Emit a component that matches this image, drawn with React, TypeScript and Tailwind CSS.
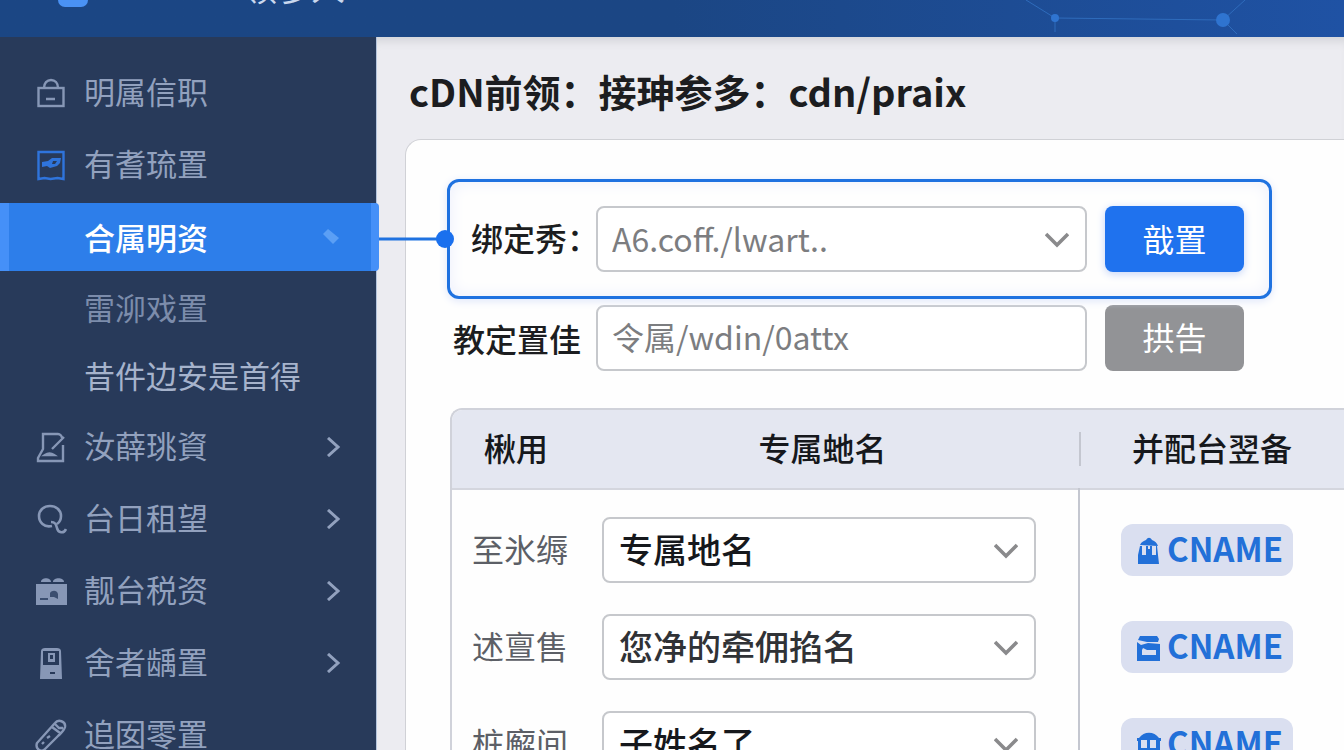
import { useState } from 'react';
import type { ReactNode } from 'react';

interface MenuItem {
  label: string;
  icon: ReactNode;
  expandable?: boolean;
}

const LockIcon = () => (
  <svg viewBox="0 0 32 32" className="w-8 h-8 text-[#8797b6]" fill="none" stroke="currentColor" strokeWidth="2.4">
    <rect x="3.5" y="11" width="25" height="18" />
    <path d="M9 11c0-5 3-8 7-8s7 3 7 8M11 22h9" />
  </svg>
);

const BookmarkIcon = () => (
  <svg viewBox="0 0 32 32" className="w-8 h-8 text-[#2f74dc]" fill="none" stroke="currentColor" strokeWidth="2.4">
    <path d="M3.5 3h25v27l-6-1-7 1-6-1-6 1z" />
    <path d="M7 13l6-1 4-3h9l-1 5-3 3-7 2-3-2-5 1z" fill="currentColor" stroke="none" />
    <path d="M18 12h4l-2 3h-3z" fill="#283a5a" stroke="none" />
  </svg>
);

const NoteIcon = () => (
  <svg viewBox="0 0 32 32" className="w-8 h-8 text-[#8797b6]" fill="none" stroke="currentColor" strokeWidth="2.4">
    <path d="M27 7c0-2-2-4-4-4H8v15L3 27v3h25V14M29 6L17 18" />
    <path d="M10 24c3-2 6-2 9 0z" />
  </svg>
);

const SearchIcon = () => (
  <svg viewBox="0 0 32 32" className="w-8 h-8 text-[#8797b6]" fill="none" stroke="currentColor" strokeWidth="2.6">
    <path d="M17 23C9 25 4 19 4 13 4 7 9 3 15 3s11 4 11 10c0 3-1 6-4 8M16 19c4 0 5 2 6 6 1 5 7 6 9 1" />
  </svg>
);

const BoxIcon = () => (
  <svg viewBox="0 0 32 32" className="w-8 h-8 text-[#8797b6]" fill="currentColor">
    <path d="M6 7c0-5 10-5 10 0zM18 7c0-5 11-5 11 0zM1 9h31v21H1z" />
    <path d="M15 18c2-3 7-3 8 1v5l-4-2h-4zM5 23h8v2H5z" fill="#3b4e70" />
  </svg>
);

const CabinetIcon = () => (
  <svg viewBox="0 0 32 32" className="w-8 h-8 text-[#8797b6]" fill="currentColor">
    <path fillRule="evenodd" d="M6 4c0-2 2-3 4-3h12c2 0 4 1 4 3l1 28H5zM8 4v14h16V4z" />
    <path fillRule="evenodd" d="M13 6h7v9h-7zM15 8v4h3V8z" />
    <path d="M15 25h5v2h-5z" fill="#283a5a" />
  </svg>
);

const PencilIcon = () => (
  <svg viewBox="0 0 32 32" className="w-8 h-8 text-[#8797b6]" fill="none" stroke="currentColor" strokeWidth="2.4">
    <path d="M20 4c3-4 11-2 10 4-1 4-4 6-7 9L10 30c-4 4-10 0-8-6zM17 8l8 6M7 25l2-2M12 19l3-2M20 5l4 4h4" />
  </svg>
);

const TowerIcon = () => (
  <svg viewBox="0 0 24 28" className="w-6 h-7 shrink-0" fill="currentColor">
    <path d="M3 9c1-3 4-4 6-5 2-3 4-3 6 0 3 1 5 3 6 6z" />
    <path fillRule="evenodd" d="M3 10h17l2 18H1V19zM5 10v9h4v-9zM15 10v9h4v-9zM11 10v3h2v-3z" />
  </svg>
);

const InboxIcon = () => (
  <svg viewBox="0 0 24 28" className="w-6 h-7 shrink-0" fill="currentColor">
    <path d="M3 3h17l2 3-1 3H10L1 7z" />
    <path fillRule="evenodd" d="M0 9l4 3 7-2 12 1v17H0zM5 17v5h14v-5h-9l-4-2z" />
  </svg>
);

const StoreIcon = () => (
  <svg viewBox="0 0 24 28" className="w-6 h-7 shrink-0" fill="currentColor">
    <path d="M2 8c5-7 15-7 20 0z" />
    <path fillRule="evenodd" d="M0 8h24v3h-1v15H1V11H0zM4 10v8h6v-8zM13 10v8h6v-8z" />
  </svg>
);

const Chevron = ({ className }: { className: string }) => (
  <svg viewBox="0 0 24 24" className={className} fill="none" stroke="currentColor" strokeWidth="3.6">
    <path d="M1 7l11 11L23 7" />
  </svg>
);

const topItems: MenuItem[] = [
  { label: '明属信职', icon: <LockIcon /> },
  { label: '有耆琉置', icon: <BookmarkIcon /> },
];

const bottomItems: MenuItem[] = [
  { label: '汝薛珧資', icon: <NoteIcon />, expandable: true },
  { label: '台日租望', icon: <SearchIcon />, expandable: true },
  { label: '靓台税资', icon: <BoxIcon />, expandable: true },
  { label: '舍者龋置', icon: <CabinetIcon />, expandable: true },
  { label: '追囡零置', icon: <PencilIcon /> },
];

const rows = [
  { label: '至氷缛', value: '专属地名', icon: <TowerIcon />, tone: 'text-[#16181c]' },
  { label: '述亶售', value: '您净的牵佣掐名', icon: <InboxIcon />, tone: 'text-[#303236]' },
  { label: '桩廨间', value: '子姓名了', icon: <StoreIcon />, tone: 'text-[#16181c]' },
];

function NavRow({ item }: { item: MenuItem }) {
  return (
    <li>
      <a href="#" className="flex h-[72px] items-center pl-[35px] pr-[34px]">
        {item.icon}
        <span className="ml-[17px] flex-1 pb-1">{item.label}</span>
        {item.expandable && (
          <svg viewBox="0 0 16 20" className="w-4 h-5" fill="none" stroke="currentColor" strokeWidth="3">
            <path d="M2 1l10 9-10 9" />
          </svg>
        )}
      </a>
    </li>
  );
}

function Sidebar() {
  return (
    <nav className="z-10 w-[377px] shrink-0 bg-[#283a5a] pt-5 text-[31px] leading-9 text-[#92a1be] border-r border-[#b4c4dc]">
      <ul>
        {topItems.map((item) => (
          <NavRow key={item.label} item={item} />
        ))}
        <li>
          <ul className="pt-0.5">
            <li className="mb-1">
              <a
                href="#"
                className="flex h-[68px] w-[379px] items-center justify-between rounded-r-sm border-l-[9px] border-r-8 border-[#4590f8] bg-[#2d7eea] pl-[75px] pr-[31px] font-medium text-white"
              >
                合属明资
                <svg viewBox="0 0 18 18" className="w-[18px] h-[18px]" fill="#5b9ff5">
                  <path d="M6 1l11 9-6 6L1 6z" />
                </svg>
              </a>
            </li>
            <li>
              <a href="#" className="flex h-[68px] items-center pb-1 pl-[84px] text-[#7c8cab]">雷泖戏置</a>
            </li>
            <li>
              <a href="#" className="flex h-[68px] items-center pb-1 pl-[84px] text-[#a6b3cc]">昔件边安是首得</a>
            </li>
          </ul>
        </li>
        {bottomItems.map((item) => (
          <NavRow key={item.label} item={item} />
        ))}
      </ul>
    </nav>
  );
}

function DomainTable() {
  return (
    <div className="ml-[3px] mt-[37px] rounded-tl-xl border-l-2 border-t-2 border-[#d0d2da] overflow-hidden">
      <table className="w-full table-fixed border-collapse">
        <thead>
          <tr className="h-[79px] border-b-2 border-[#d4d6de] bg-[#e4e7f1] text-[32px] leading-10 text-[#16181c]">
            <th className="w-[150px] pb-1 pl-8 text-left font-medium">楸用</th>
            <th className="w-[477px] pb-1 pr-9 text-center font-medium">专属虵名</th>
            <th className="text-left font-medium">
              <div className="flex h-[34px] items-center border-l-2 border-[#c4c7d0] pb-1 pl-[51px] whitespace-nowrap">并配台翌备</div>
            </th>
          </tr>
        </thead>
        <tbody>
          {rows.map((row, i) => (
            <tr key={row.label}>
              <td className="pt-[27px] pb-1 pl-5 align-top">
                <label htmlFor={`domain-${i}`} className="block text-[32px] leading-[62px] text-[#5c5f66]">
                  {row.label}
                </label>
              </td>
              <td className="pt-[27px] pb-1 pr-[42px] align-top">
                <div className="relative">
                  <select
                    id={`domain-${i}`}
                    className={`block h-[66px] w-full appearance-none rounded-lg border-2 border-[#c6c8cc] bg-white pb-1 pl-[15px] text-[34px] font-medium ${row.tone}`}
                  >
                    <option>{row.value}</option>
                  </select>
                  <Chevron className="pointer-events-none absolute right-[18px] top-[21px] w-6 h-6 text-[#8a8a8c]" />
                </div>
              </td>
              <td className="border-l-2 border-[#c4c7d0] pl-[41px] pt-[34px] align-top">
                <span className="inline-flex h-[52px] w-[172px] items-center gap-1.5 rounded-xl bg-[#dadff0] pl-4 text-[33px] leading-10 font-bold text-[#2270d8]">
                  {row.icon}
                  <span className="pb-1">CNAME</span>
                </span>
              </td>
            </tr>
          ))}
        </tbody>
      </table>
    </div>
  );
}

export default function App() {
  const [path, setPath] = useState('令属/wdin/0attx');

  return (
    <div className="flex h-screen flex-col overflow-hidden font-['Noto_Sans_CJK_SC',sans-serif]">
      <header className="flex h-[37px] shrink-0 items-start justify-between overflow-hidden bg-gradient-to-r from-[#1b4684] via-[#1b4684] to-[#1f52a4]">
        <div className="flex items-start pl-[58px]">
          <div className="h-[7px] w-[30px] rounded-b-full bg-[#4a92f4]" />
          <div className="ml-[155px] flex h-1 items-end text-[34px] leading-[34px] text-[#c9d8ee]">
            <span>领参人</span>
          </div>
        </div>
        <svg viewBox="0 0 344 37" className="h-[37px] w-[344px]" fill="none" stroke="#2f6cbc">
          <path d="M26 0l29 18 168 2 22-20M55 18v14M223 20l14 14" />
          <circle cx="55" cy="18" r="4" fill="#2f74d0" stroke="none" />
          <circle cx="223" cy="20" r="7" fill="#2f74d0" stroke="none" />
        </svg>
      </header>
      <div className="flex min-h-0 flex-1">
        <Sidebar />
        <main className="min-w-0 flex-1 bg-[#ececf1] pl-7 shadow-[inset_0_10px_10px_-6px_#d2d3d8]">
          <h1 className="pl-1 pt-[30px] pb-6 text-[38px] leading-[48px] font-bold text-[#1c1d20]">
            cDN前领：接珅参多：cdn/praix
          </h1>
          <section className="h-full rounded-tl-2xl border-l border-t border-[#d0d1d6] bg-[#fefefe] pl-[41px] pt-[39px]">
            <div className="relative flex max-w-[825px] items-center rounded-xl border-[3px] border-[#1f72e0] py-6 pl-[21px] pr-[25px] shadow-[0_2px_8px_#dfe6fa,inset_0_0_16px_#eceffc]">
              <span className="absolute right-full top-1/2 h-[3px] w-[71px] -translate-y-1/2 bg-[#1f72e0]" />
              <span className="absolute -left-3.5 top-1/2 h-[18px] w-[18px] -translate-y-1/2 rounded-full bg-[#1a70ee]" />
              <label htmlFor="bind" className="w-[125px] shrink-0 pb-1 text-[32px] font-medium text-[#1c1d20] whitespace-nowrap">
                绑定秀：
              </label>
              <div className="relative flex-1">
                <select id="bind" className="block h-[66px] w-full appearance-none rounded-lg border-2 border-[#c6c8cc] bg-white pb-0.5 pl-3.5 text-[32px] text-[#7c7d80]">
                  <option>A6.coff./lwart..</option>
                </select>
                <Chevron className="pointer-events-none absolute right-[18px] top-[21px] w-6 h-6 text-[#8a8a8c]" />
              </div>
              <button className="ml-[18px] h-[66px] w-[139px] rounded-lg bg-[#1f72ee] pb-0.5 text-[32px] text-white shadow-[0_2px_8px_#c4d4f8]">
                戠置
              </button>
            </div>
            <div className="ml-1.5 mt-1.5 flex max-w-[791px] items-center">
              <label htmlFor="path" className="w-[143px] shrink-0 text-[32px] font-medium text-[#1c1d20]">
                教定置佳
              </label>
              <input
                id="path"
                value={path}
                onChange={(e) => setPath(e.target.value)}
                className="h-[66px] min-w-0 flex-1 rounded-lg border-2 border-[#c6c8cc] bg-white px-3.5 pb-1 text-[32px] text-[#7c7d80]"
              />
              <button className="ml-[18px] h-[66px] w-[139px] rounded-lg bg-[#929396] pb-1 text-[32px] text-white">
                拱告
              </button>
            </div>
            <DomainTable />
          </section>
        </main>
      </div>
    </div>
  );
}
